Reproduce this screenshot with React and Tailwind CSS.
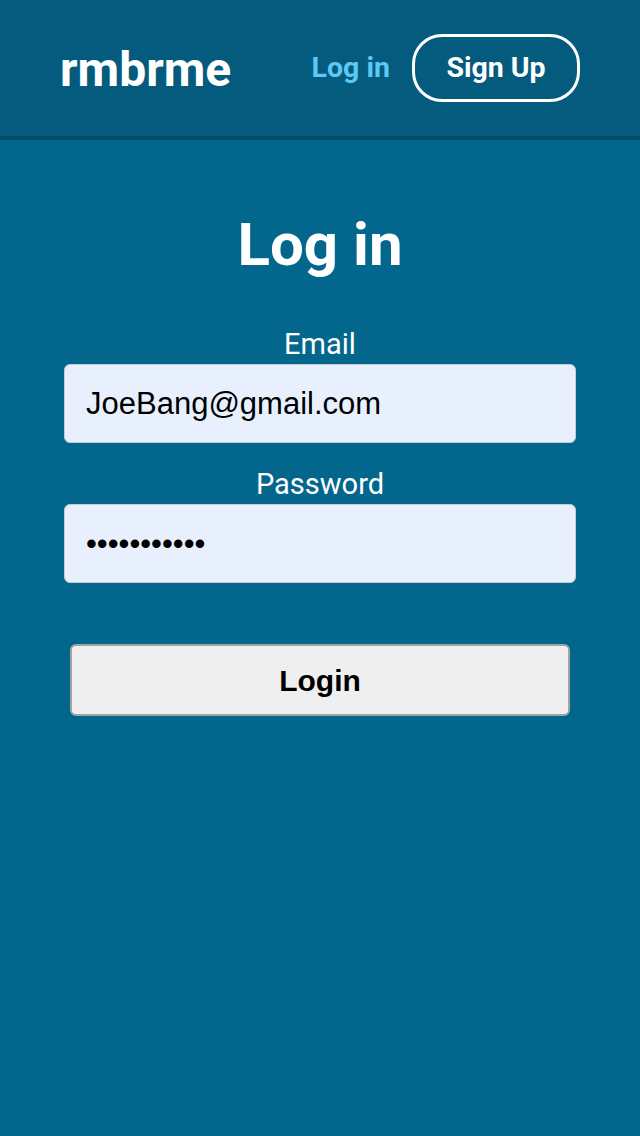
import React from 'react';

const roboto = { fontFamily: 'Roboto, "Noto Sans", sans-serif' };
const arial = { fontFamily: '"Liberation Sans", Arial, sans-serif' };

const Header = () => (
  <header className="h-[140px] bg-[#055b7e] border-b-4 border-[#034c69] flex items-center justify-between px-[60px]" style={roboto}>
    <h1 className="text-[48px] leading-none font-bold text-white pt-[3px]">rmbrme</h1>
    <nav className="flex items-center gap-[22px]">
      <a className="text-[28.5px] leading-none font-bold text-[#5bc8f5]">Log in</a>
      <button className="w-[168px] h-[68px] rounded-[30px] border-[3px] border-white text-white text-[28.5px] leading-none font-bold">
        Sign Up
      </button>
    </nav>
  </header>
);

const Field = ({ label, type, value }) => (
  <div className="flex flex-col items-center">
    <label className="text-[29px] leading-none text-white mb-[6px] h-[28px]" style={roboto}>{label}</label>
    <input
      type={type}
      defaultValue={value}
      readOnly
      className="w-[512px] h-[79px] bg-[#e8f0fe] border border-[#c9cdd2] rounded-[6px] pl-[21px] text-[31px] text-black outline-none"
      style={arial}
    />
  </div>
);

export default function App() {
  return (
    <div className="min-h-[1136px] bg-[#03668c]">
      <Header />
      <main className="flex flex-col items-center pt-[75px]">
        <h2 className="text-[60px] leading-none font-bold text-white mb-[55px]" style={roboto}>Log in</h2>
        <div className="flex flex-col gap-[27px]">
          <Field label="Email" type="email" value="JoeBang@gmail.com" />
          <Field label="Password" type="password" value="secretpassw" />
        </div>
        <button
          className="mt-[61px] w-[500px] h-[72px] bg-[#efefef] border-2 border-[#a3a3a3] rounded-[6px] text-[30px] font-bold text-black"
          style={arial}
        >
          Login
        </button>
      </main>
    </div>
  );
}
